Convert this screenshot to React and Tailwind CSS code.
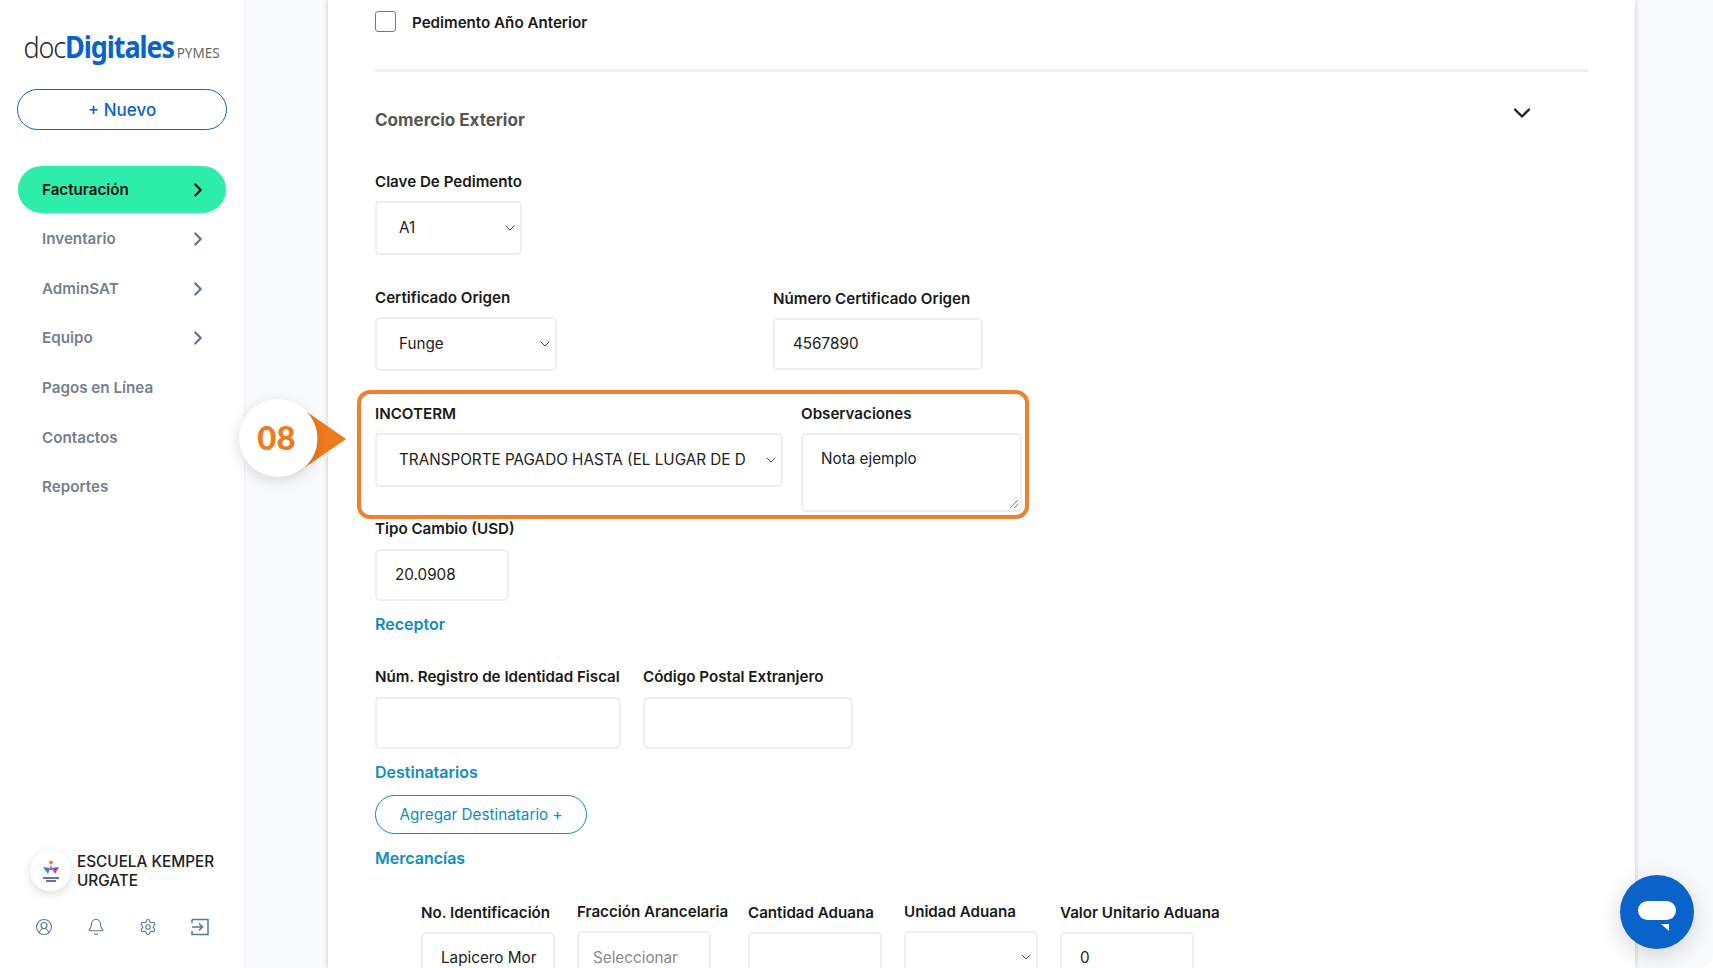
import React from 'react';
import { ChevronRight, ChevronDown, CircleUserRound, Bell, Settings } from 'lucide-react';

const menuItems = ['Facturación', 'Inventario', 'AdminSAT', 'Equipo', 'Pagos en Línea', 'Contactos', 'Reportes'];
const withArrow = ['Facturación', 'Inventario', 'AdminSAT', 'Equipo'];

const Label = ({ children, className = '' }) => (
    <div className={`pt-[1px] text-[15.15px] leading-[21px] font-semibold text-[#1a1a1a] whitespace-nowrap ${className}`}>{children}</div>
);

const Field = ({ value, className = '', arrow = false, muted = false }) => (
    <div className={`relative h-[52px] flex items-center bg-white border-2 border-[#eeeeee] rounded-[5px] text-[15.25px] overflow-hidden whitespace-nowrap ${muted ? 'pt-[3px] text-[#8a8a8a]' : 'pt-[1px] text-[#222222]'} ${className}`}>
        {value}
        {arrow && (
            <div className="absolute right-[2px] inset-y-0 flex items-center bg-white">
                <ChevronDown size={16} strokeWidth={1.5} className="text-[#444444]" />
            </div>
        )}
    </div>
);

const SectionLink = ({ children, className = '' }) => (
    <div className={`text-[16px] leading-[22px] font-semibold text-[#0f8dbd] ${className}`}>{children}</div>
);

const Sidebar = () => (
    <aside className="w-[245px] shrink-0 h-full bg-white flex flex-col border-r border-[#f0f2f5]">
        <div className="pl-[26px] pt-[27px] h-[89px] flex items-baseline origin-left scale-x-90 whitespace-nowrap font-['Noto_Sans',sans-serif] tracking-[-1.2px]">
            <span className="text-[30px] leading-[40px] font-light text-[#2b2b2b]">doc</span>
            <span className="text-[30px] leading-[40px] font-bold text-[#0a63c9]">Digitales</span>
            <span className="ml-[3px] text-[15px] tracking-normal text-[#666666]">PYMES</span>
        </div>
        <div className="mx-[17px] h-[41px] pt-[2px] flex items-center justify-center border border-[#0a63c9] rounded-full text-[#0a63c9] text-[17px] font-medium">
            + Nuevo
        </div>
        <nav className="mt-[36px] ml-[18px] w-[208px] flex flex-col gap-[2.6px]">
            {menuItems.map((item) => {
                const active = item === 'Facturación';
                return (
                    <div
                        key={item}
                        className={`h-[47px] pl-[24px] pr-[17px] rounded-full flex items-center justify-between text-[15.2px] font-semibold ${active ? 'bg-[#2dedaa] text-[#111111]' : 'text-[#75808f]'}`}
                    >
                        <span className="pt-[1px]">{item}</span>
                        {withArrow.includes(item) && (
                            <ChevronRight size={22} strokeWidth={2.4} className={active ? 'text-[#111111]' : 'text-[#64748b]'} />
                        )}
                    </div>
                );
            })}
        </nav>
        <div className="mt-auto pb-[32px]">
            <div className="flex items-center pl-[30px] gap-[6px]">
                <div className="w-[41px] h-[41px] rounded-full bg-white shadow-[0_3px_10px_rgba(0,0,0,0.14)] flex flex-col items-center justify-center">
                    <svg width="18" height="16" viewBox="0 0 18 16">
                        <circle cx="9" cy="2.5" r="2" fill="#f08a35" />
                        <path d="M1 7 L8 8 L6 14 Z" fill="#3f7fd6" />
                        <path d="M17 7 L10 8 L13 14 Z" fill="#a53cc4" />
                        <path d="M9 5 L11 10 L7 10 Z" fill="#e0489a" />
                    </svg>
                    <div className="w-[16px] h-[2px] mt-[1px] bg-[#6a6fa8]" />
                    <div className="w-[10px] h-[2px] mt-[1px] bg-[#6a6fa8]" />
                </div>
                <div className="pt-[1px] text-[15.3px] leading-[19px] font-medium text-[#222222]">
                    ESCUELA KEMPER<br />URGATE
                </div>
            </div>
            <div className="mt-[27px] pl-[35px] flex gap-[34px] text-[#5b7a94]">
                <CircleUserRound size={18} strokeWidth={1.5} />
                <Bell size={18} strokeWidth={1.5} />
                <Settings size={18} strokeWidth={1.5} />
                <svg width="18" height="18" viewBox="0 0 18 18" fill="none" stroke="currentColor" strokeWidth="1.5">
                    <path d="M1 1.5 H17 V16.5 H1 V13 M1 5 V1.5 M1 9 H11 M8 5.5 L11.5 9 L8 12.5" />
                </svg>
            </div>
        </div>
    </aside>
);

const Annotation = () => (
    <>
        <div className="absolute -left-[18px] -top-[12px] w-[672px] h-[129px] border-[4px] border-[#f07f2e] rounded-[13px] pointer-events-none" />
        <svg className="absolute -left-[78px] top-[10px]" width="50" height="62" viewBox="0 0 50 62">
            <path d="M10 0 L49 27 L0 61 A39 39 0 0 0 10 0 Z" fill="#f07a1f" />
        </svg>
        <div className="absolute -left-[136px] -top-[3px] w-[78px] h-[78px] pr-[3px] rounded-full bg-white shadow-[0_4px_14px_rgba(0,0,0,0.14)] flex items-center justify-center text-[#f07a22] text-[33px] font-black font-['Lato',sans-serif]">
            08
        </div>
    </>
);

export default function App() {
    return (
        <div className="w-[1713px] h-[968px] overflow-hidden relative flex bg-[#f8fafc] rounded-br-[14px] font-['Inter',sans-serif]">
            <Sidebar />
            <main className="w-[1307px] ml-[83px] h-full bg-white shadow-[0_0_5px_rgba(0,0,0,0.22)] pl-[47px] pr-[47px]">
                <div className="h-[69px] pt-[11px] flex items-start">
                    <div className="w-[21px] h-[21px] border border-[#777777] rounded-[3px]" />
                    <Label className="ml-[16px]">Pedimento Año Anterior</Label>
                </div>
                <div className="h-[3px] bg-[#eeeeee]" />
                <div className="mt-[35px] h-[26px] flex items-start justify-between pr-[52px]">
                    <div className="text-[17px] leading-[26px] font-bold text-[#555555]">Comercio Exterior</div>
                    <ChevronDown size={28} strokeWidth={2} className="-mt-[8px] text-[#222222]" />
                </div>
                <Label className="mt-[37px]">Clave De Pedimento</Label>
                <Field value="A1" arrow className="mt-[9px] w-[147px] h-[54px] pl-[22px]" />
                <div className="mt-[31px] flex items-start">
                    <div className="w-[398px]">
                        <Label>Certificado Origen</Label>
                        <Field value="Funge" arrow className="mt-[9px] w-[182px] h-[54px] pl-[22px]" />
                    </div>
                    <div className="pt-[1px]">
                        <Label>Número Certificado Origen</Label>
                        <Field value="4567890" className="mt-[9px] w-[210px] pl-[18px]" />
                    </div>
                </div>
                <div className="relative mt-[31px] h-[115px] flex items-start">
                    <Annotation />
                    <div className="w-[426px]">
                        <Label>INCOTERM</Label>
                        <Field value="TRANSPORTE PAGADO HASTA (EL LUGAR DE D" arrow className="mt-[9px] w-[408px] h-[54px] pl-[22px]" />
                    </div>
                    <div>
                        <Label>Observaciones</Label>
                        <div className="relative mt-[9px] w-[221px] h-[79px] border-2 border-[#eeeeee] rounded-[5px] pl-[18px] pt-[12px] text-[15.25px] leading-[24px] text-[#222222]">
                            Nota ejemplo
                            <svg className="absolute right-[1px] bottom-[1px]" width="10" height="10" viewBox="0 0 10 10" stroke="#777777" strokeWidth="1">
                                <path d="M1 9 L9 1 M5 9 L9 5" />
                            </svg>
                        </div>
                    </div>
                </div>
                <Label>Tipo Cambio (USD)</Label>
                <Field value="20.0908" className="mt-[10px] w-[134px] pl-[18px]" />
                <SectionLink className="mt-[12px]">Receptor</SectionLink>
                <div className="mt-[30px] flex gap-[22px]">
                    <div className="w-[246px]">
                        <Label>Núm. Registro de Identidad Fiscal</Label>
                        <Field value="" className="mt-[10px] w-[246px]" />
                    </div>
                    <div>
                        <Label>Código Postal Extranjero</Label>
                        <Field value="" className="mt-[10px] w-[210px]" />
                    </div>
                </div>
                <SectionLink className="mt-[12px]">Destinatarios</SectionLink>
                <div className="mt-[12px] w-[212px] h-[39px] pt-[1px] flex items-center justify-center border border-[#0f8dbd] rounded-full text-[#0f8dbd] text-[15.25px]">
                    Agregar Destinatario +
                </div>
                <SectionLink className="mt-[13px]">Mercancías</SectionLink>
                <div className="mt-[32px] ml-[46px] flex gap-[22px]">
                    <div className="w-[134px]">
                        <Label>No. Identificación</Label>
                        <Field value="Lapicero Mor" className="mt-[9px] w-[134px] pl-[18px]" />
                    </div>
                    <div className="w-[149px] -mt-[1px]">
                        <Label>Fracción Arancelaria</Label>
                        <Field value="Seleccionar" muted className="mt-[9px] w-[134px] pl-[14px]" />
                    </div>
                    <div className="w-[134px]">
                        <Label>Cantidad Aduana</Label>
                        <Field value="" className="mt-[9px] w-[134px]" />
                    </div>
                    <div className="w-[134px] -mt-[1px]">
                        <Label>Unidad Aduana</Label>
                        <Field value="" arrow className="mt-[9px] w-[134px]" />
                    </div>
                    <div className="w-[134px]">
                        <Label>Valor Unitario Aduana</Label>
                        <Field value="0" className="mt-[9px] w-[134px] pl-[18px]" />
                    </div>
                </div>
            </main>
            <div className="absolute left-[1620px] top-[875px] w-[74px] h-[74px] rounded-full bg-[#0a63c9] shadow-[0_6px_24px_rgba(0,0,0,0.16)] flex items-center justify-center">
                <div className="relative w-[38px] h-[19px] rounded-full bg-white -mt-[3px]">
                    <div className="absolute right-[7px] top-[23px] w-0 h-0 border-t-[7px] border-t-white border-l-[8px] border-l-transparent" />
                </div>
            </div>
        </div>
    );
}
